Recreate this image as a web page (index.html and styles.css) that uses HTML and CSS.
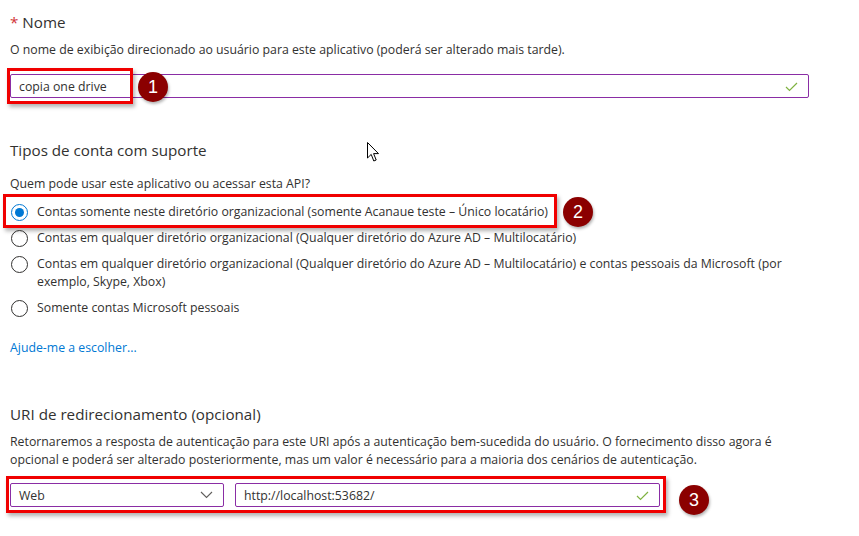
FILE: index.html
```html
<!DOCTYPE html>
<html lang="pt-BR">
<head>
    <meta charset="UTF-8">
    <title>Registrar um aplicativo</title>
    <link rel="stylesheet" href="styles.css">
</head>
<body>
    <div class="page">
        <h2 class="label"><span class="req">*</span> Nome</h2>
        <p class="desc">O nome de exibição direcionado ao usuário para este aplicativo (poderá ser alterado mais tarde).</p>

        <div class="field-wrap">
            <div class="field name-field">
                <span class="value">copia one drive</span>
                <svg class="check" width="13" height="10" viewBox="0 0 13 10"><polyline points="1,5 4.5,8.5 12,1" fill="none" stroke="#7fb241" stroke-width="1.2"/></svg>
            </div>
            <div class="mark mark-name"></div>
            <div class="badge badge-1">1</div>
        </div>

        <h2 class="label section-title">Tipos de conta com suporte</h2>
        <p class="desc question">Quem pode usar este aplicativo ou acessar esta API?</p>

        <div class="radio-list">
            <div class="radio-row first">
                <span class="radio checked"></span>
                <span>Contas somente neste diretório organizacional (somente Acanaue teste – Único locatário)</span>
                <div class="mark mark-radio"></div>
                <div class="badge badge-2">2</div>
            </div>
            <div class="radio-row">
                <span class="radio"></span>
                <span>Contas em qualquer diretório organizacional (Qualquer diretório do Azure AD – Multilocatário)</span>
            </div>
            <div class="radio-row">
                <span class="radio"></span>
                <span>Contas em qualquer diretório organizacional (Qualquer diretório do Azure AD – Multilocatário) e contas pessoais da Microsoft (por exemplo, Skype, Xbox)</span>
            </div>
            <div class="radio-row">
                <span class="radio"></span>
                <span>Somente contas Microsoft pessoais</span>
            </div>
        </div>

        <a class="help-link" href="#">Ajude-me a escolher...</a>

        <h2 class="label uri-title">URI de redirecionamento (opcional)</h2>
        <p class="desc uri-desc">Retornaremos a resposta de autenticação para este URI após a autenticação bem-sucedida do usuário. O fornecimento disso agora é opcional e poderá ser alterado posteriormente, mas um valor é necessário para a maioria dos cenários de autenticação.</p>

        <div class="uri-row">
            <div class="field select-field">
                <span class="value">Web</span>
                <svg class="chevron" width="13" height="8" viewBox="0 0 13 8"><polyline points="1,1 6.5,6.5 12,1" fill="none" stroke="#605e5c" stroke-width="1.1"/></svg>
            </div>
            <div class="field url-field">
                <span class="value">http://localhost:53682/</span>
                <svg class="check" width="13" height="10" viewBox="0 0 13 10"><polyline points="1,5 4.5,8.5 12,1" fill="none" stroke="#7fb241" stroke-width="1.2"/></svg>
            </div>
            <div class="mark mark-uri"></div>
            <div class="badge badge-3">3</div>
        </div>

        <!-- mouse pointer captured in the screenshot -->
        <svg class="cursor" width="13" height="21" viewBox="0 0 13 21"><path d="M0.5,0.5 L0.5,16 L4.2,12.4 L6.8,19 L9.2,18 L6.6,11.6 L11.5,11.6 Z" fill="#fff" stroke="#000" stroke-width="1"/></svg>
    </div>
</body>
</html>
```

FILE: styles.css
```css
body {
    margin: 0;
    background-color: #ffffff;
    font-family: "Segoe UI", "Open Sans", sans-serif;
    color: #323130;
}

.page {
    position: relative;
    width: 799px;
    min-height: 536px;
    padding: 0 10px;
}

.label {
    margin: 12px 0 0 0;
    font-size: 15.2px;
    font-weight: normal;
    line-height: 20px;
    color: #323130;
}

.req {
    color: #d13438;
}

.desc {
    margin: 9px 0 0 0;
    font-size: 12.3px;
    line-height: 18px;
}

.field-wrap {
    position: relative;
    margin-top: 15px;
}

.field {
    height: 22px;
    border: 1px solid #8a2da5;
    border-radius: 2px;
    display: flex;
    align-items: center;
    justify-content: space-between;
    padding: 0 10px 0 8px;
    font-size: 12.3px;
}

.check {
    margin-top: 1px;
}

.section-title {
    margin-top: 42px;
}

.question {
    margin-top: 15px;
}

.radio-list {
    margin-top: 10px;
    display: flex;
    flex-direction: column;
    gap: 8px;
}

.radio-row {
    position: relative;
    display: flex;
    align-items: flex-start;
    gap: 9px;
    padding-left: 1px;
    font-size: 12.3px;
    line-height: 18px;
}

.radio {
    flex: none;
    width: 15px;
    height: 15px;
    margin-top: 1px;
    border: 1px solid #323130;
    border-radius: 50%;
    position: relative;
}

.radio.checked {
    border-color: #0078d4;
}

.radio.checked::after {
    content: "";
    position: absolute;
    left: 3px;
    top: 3px;
    width: 9px;
    height: 9px;
    border-radius: 50%;
    background-color: #0078d4;
}

.help-link {
    display: block;
    margin-top: 22px;
    font-size: 12.3px;
    line-height: 18px;
    color: #0078d4;
    text-decoration: none;
}

.uri-title {
    margin-top: 47px;
}

.uri-desc {
    margin-top: 9px;
}

.uri-row {
    position: relative;
    margin-top: 14px;
    display: flex;
    gap: 11px;
}

.select-field {
    width: 194px;
}

.url-field {
    width: 405px;
}

/* red annotation boxes */
.mark {
    position: absolute;
    border: 3px solid #f00000;
    box-shadow: 2px 3px 4px rgba(0, 0, 0, 0.3);
    box-sizing: border-box;
    pointer-events: none;
}

.mark-name {
    left: -3px;
    top: -6px;
    width: 126px;
    height: 36px;
}

.mark-radio {
    left: -7px;
    top: -9px;
    width: 554px;
    height: 34px;
}

.mark-uri {
    left: -4px;
    top: -7px;
    width: 660px;
    height: 37px;
}

/* numbered callouts */
.badge {
    position: absolute;
    width: 30px;
    height: 30px;
    border-radius: 50%;
    background-color: #8b0000;
    color: #ffffff;
    font-family: "Liberation Sans", Arial, sans-serif;
    font-size: 18px;
    line-height: 30px;
    text-align: center;
    box-shadow: 1px 2px 3px rgba(0, 0, 0, 0.3);
}

.badge-1 {
    left: 128px;
    top: -2px;
}

.badge-2 {
    left: 553px;
    top: -6px;
}

.badge-3 {
    left: 669px;
    top: 2px;
}

.cursor {
    position: absolute;
    left: 367px;
    top: 130px;
}
```
